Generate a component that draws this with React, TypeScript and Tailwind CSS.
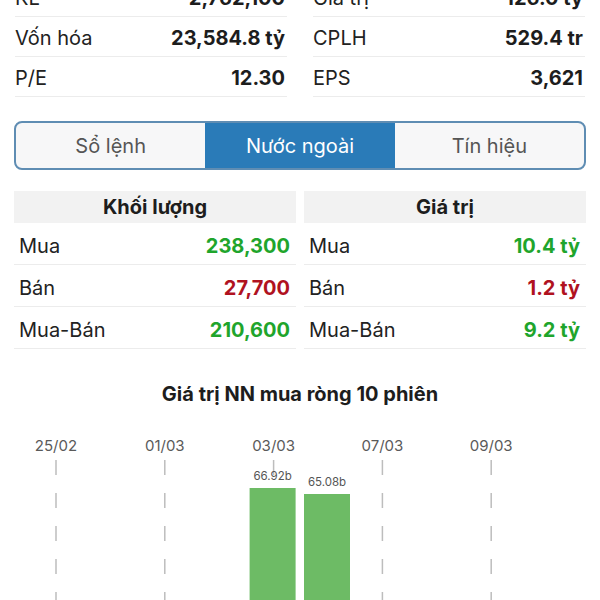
const font = { fontFamily: 'Inter, "Noto Sans", sans-serif' };

const stats: [string, string, string, string][] = [
  ['KL', '2,762,100', 'Giá trị', '126.0 tỷ'],
  ['Vốn hóa', '23,584.8 tỷ', 'CPLH', '529.4 tr'],
  ['P/E', '12.30', 'EPS', '3,621'],
];

const volume = [
  { label: 'Mua', value: '238,300', up: true },
  { label: 'Bán', value: '27,700', up: false },
  { label: 'Mua-Bán', value: '210,600', up: true },
];

const amount = [
  { label: 'Mua', value: '10.4 tỷ', up: true },
  { label: 'Bán', value: '1.2 tỷ', up: false },
  { label: 'Mua-Bán', value: '9.2 tỷ', up: true },
];

function StatCol({ rows }: { rows: [string, string][] }) {
  return (
    <div className="flex-1">
      {rows.map(([k, v]) => (
        <div
          key={k}
          className="flex h-10 items-center justify-between border-b border-[#ececec] pt-[3px] pr-[2px] text-[20px]"
        >
          <span className="text-[#222]">{k}</span>
          <span className="font-bold text-[#1d1d1d]">{v}</span>
        </div>
      ))}
    </div>
  );
}

function FlowCol({ title, rows }: { title: string; rows: typeof volume }) {
  return (
    <div className="flex-1">
      <div className="flex h-[32px] items-center justify-center bg-[#f2f2f2] text-[20px] font-bold text-[#1d1d1d]">
        {title}
      </div>
      {rows.map((r) => (
        <div
          key={r.label}
          className="flex h-[42px] items-center justify-between border-b border-[#ececec] pt-[4px] pl-[5px] pr-[6px] text-[20px]"
        >
          <span className="text-[#222]">{r.label}</span>
          <span className={r.up ? 'font-bold text-[#1fa52c]' : 'font-bold text-[#b0121f]'}>{r.value}</span>
        </div>
      ))}
    </div>
  );
}

const slot = 54.4;
const x0 = 56;
const dates = ['25/02', '01/03', '03/03', '07/03', '09/03'];
const bars = [
  { i: 4, top: 488, label: '66.92b' },
  { i: 5, top: 494, label: '65.08b' },
];

function NetChart() {
  // svg begins at y=430 on the page
  const oy = 430;
  return (
    <svg width="600" height="170" className="block" style={font}>
      {dates.map((d, k) => {
        const x = x0 + slot * 2 * k;
        return (
          <g key={d}>
            <text x={x} y={451 - oy} textAnchor="middle" fontSize="15" fill="#5a5a5a">
              {d}
            </text>
            <line x1={x} x2={x} y1={460 - oy} y2={170} stroke="#bdbdbd" strokeWidth="1.5" strokeDasharray="15 18" />
          </g>
        );
      })}
      {bars.map((b) => {
        const cx = x0 + slot * b.i - 1;
        return (
          <g key={b.label}>
            <rect x={cx - 23} y={b.top - oy} width="46" height={170} fill="#6dbb65" />
            <text x={cx} y={b.top - oy - 8} textAnchor="middle" fontSize="11.5" fill="#555">
              {b.label}
            </text>
          </g>
        );
      })}
    </svg>
  );
}

export default function App() {
  const tabs = ['Sổ lệnh', 'Nước ngoài', 'Tín hiệu'];
  return (
    <div className="h-[600px] w-[600px] overflow-hidden bg-white" style={font}>
      <div className="-mt-[23px] flex gap-[26px] pl-[15px] pr-[15px]">
        <StatCol rows={stats.map((s) => [s[0], s[1]])} />
        <StatCol rows={stats.map((s) => [s[2], s[3]])} />
      </div>

      <div className="mx-[14px] mt-[24px] flex h-[49px] overflow-hidden rounded-[8px] border-2 border-[#5f8db3] bg-[#f7f7f8]">
        {tabs.map((t, i) => (
          <div
            key={t}
            className={
              i === 1
                ? 'flex flex-1 items-center justify-center bg-[#2a7bb8] text-[20px] text-white'
                : 'flex flex-1 items-center justify-center text-[20px] text-[#555]'
            }
          >
            {t}
          </div>
        ))}
      </div>

      <div className="mt-[21px] flex gap-[8px] px-[14px]">
        <FlowCol title="Khối lượng" rows={volume} />
        <FlowCol title="Giá trị" rows={amount} />
      </div>

      <div className="mt-[30px] h-[30px] text-center text-[20px] font-bold text-[#1d1d1d]">
        Giá trị NN mua ròng 10 phiên
      </div>

      <div className="mt-[21px]">
        <NetChart />
      </div>
    </div>
  );
}
